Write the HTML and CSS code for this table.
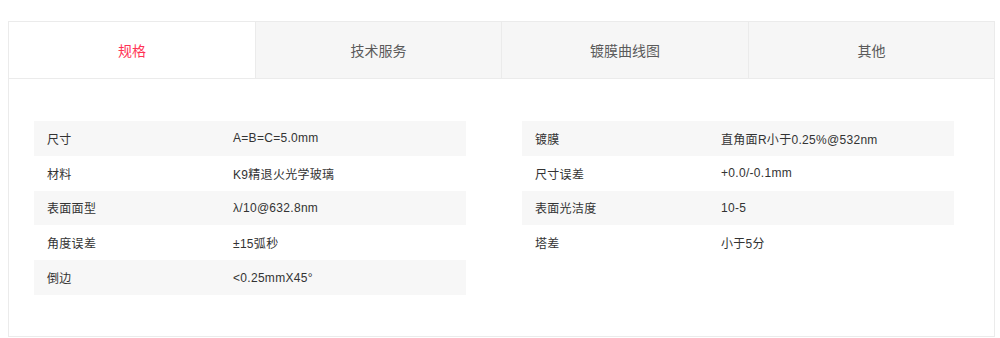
FILE: index.html
```html
<!DOCTYPE html>
<html lang="zh-CN">
<head>
<meta charset="utf-8">
<link rel="stylesheet" href="styles.css">
</head>
<body>
<div class="wrap">
  <div class="tabs">
    <div class="tab active">规格</div>
    <div class="tab">技术服务</div>
    <div class="tab">镀膜曲线图</div>
    <div class="tab">其他</div>
  </div>
  <div class="content">
    <div class="spec">
      <div class="row"><span class="k">尺寸</span><span class="v">A=B=C=5.0mm</span></div>
      <div class="row"><span class="k">材料</span><span class="v">K9精退火光学玻璃</span></div>
      <div class="row"><span class="k">表面面型</span><span class="v">λ/10@632.8nm</span></div>
      <div class="row"><span class="k">角度误差</span><span class="v">±15弧秒</span></div>
      <div class="row"><span class="k">倒边</span><span class="v">&lt;0.25mmX45°</span></div>
    </div>
    <div class="spec">
      <div class="row"><span class="k">镀膜</span><span class="v">直角面R小于0.25%@532nm</span></div>
      <div class="row"><span class="k">尺寸误差</span><span class="v">+0.0/-0.1mm</span></div>
      <div class="row"><span class="k">表面光洁度</span><span class="v">10-5</span></div>
      <div class="row"><span class="k">塔差</span><span class="v">小于5分</span></div>
    </div>
  </div>
</div>
</body>
</html>
```

FILE: styles.css
```css
html, body {
  margin: 0;
  padding: 0;
  background: #fff;
}
body {
  font-family: "Liberation Sans", "Noto Sans CJK SC", sans-serif;
  color: #333;
}
.wrap {
  margin: 21px 0 0 8px;
  width: 985px;
  border: 1px solid #ebebeb;
}
.tabs {
  display: grid;
  grid-template-columns: 246px 246px 247px 246px;
  height: 56px;
  border-bottom: 1px solid #ebebeb;
}
.tab {
  display: flex;
  align-items: center;
  justify-content: center;
  background: #f6f6f6;
  color: #5a5a5a;
  font-size: 14px;
  border-left: 1px solid #ebebeb;
}
.tab:first-child {
  border-left: none;
}
.tab.active {
  background: #fff;
  color: #ff3355;
}
.content {
  display: grid;
  grid-template-columns: 432px 432px;
  column-gap: 56px;
  padding: 42px 0 41px 25px;
  align-items: start;
}
.row {
  display: flex;
  align-items: center;
  height: 34.8px;
  font-size: 12px;
  letter-spacing: 0.3px;
  color: #333;
}
.row:nth-child(odd) {
  background: #f7f7f7;
}
.k {
  width: 186px;
  padding-left: 13px;
}
.v {
  flex: 1;
}
```
